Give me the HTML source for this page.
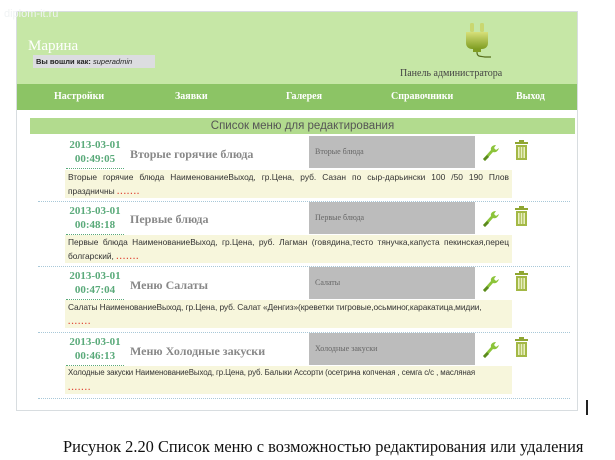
<!DOCTYPE html>
<html><head><meta charset="utf-8"><style>
*{margin:0;padding:0;box-sizing:border-box}
body{width:615px;height:460px;background:#fff;position:relative;overflow:hidden;font-family:"Liberation Sans",sans-serif}
.abs{position:absolute}
#frame{left:16px;top:11px;width:562px;height:400px;border:1px solid #d8dde0;background:#fff}
#hdr{left:17px;top:12px;width:560px;height:72px;background:#c6e7a6}
#nav{left:17px;top:84px;width:560px;height:26px;background:#8cc465}
.nav{top:91px;font:bold 10px "Liberation Serif",serif;color:#fff}
#tb{left:30px;top:118px;width:545px;height:16px;background:#b2db8e;text-align:center;font-size:11.5px;color:#555;line-height:16px}
.date{font:bold 11px "Liberation Serif",serif;color:#5aaa7a;text-align:center;width:58px;line-height:14px;border-bottom:1px dotted #5aaa7a;padding-bottom:2px}
.ttl{font:bold 12px "Liberation Serif",serif;color:#888}
.gray{width:166px;height:32px;background:#bcbcbc;font:8px "Liberation Serif",serif;color:#666;padding:11px 6px}
.desc{left:65px;width:447px;height:28px;background:#f7f6dc;font-size:8.4px;color:#333;line-height:14px;padding:0 3px;text-align:justify;overflow:hidden}
.nw{white-space:nowrap;display:block;letter-spacing:-0.1px}
.dots{color:#e04a3a;font-weight:bold;letter-spacing:1px}
.sep{left:38px;width:532px;border-top:1px dotted #a8c8d8}
</style></head><body>
<div id="frame" class="abs"></div>
<div id="hdr" class="abs"></div>
<div class="abs" style="left:4px;top:8px;font-size:11px;color:#f0f3f4">diplom-it.ru</div>
<div class="abs" style="left:28px;top:38px;font:15px 'Liberation Serif',serif;color:#fff">Марина</div>
<div class="abs" style="left:33px;top:55px;width:122px;height:13px;background:#dcdde0;font-size:7.5px;line-height:13px;padding-left:3px;color:#222"><b>Вы вошли как:</b> <i>superadmin</i></div>
<svg class="abs" style="left:463px;top:22px" width="32" height="38" viewBox="0 0 32 38">
<defs><linearGradient id="g" x1="0" y1="0" x2="0" y2="1"><stop offset="0" stop-color="#d7e07a"/><stop offset="1" stop-color="#7f9d22"/></linearGradient></defs>
<rect x="7" y="1" width="4" height="9" rx="1.5" fill="#c9d770"/><rect x="17" y="1" width="4" height="9" rx="1.5" fill="#c9d770"/>
<path d="M3 10h22v11c0 4-3 6-6 6h-10c-3 0-6-2-6-6z" fill="url(#g)"/>
<rect x="10" y="27" width="8" height="3" fill="#7f9d22"/>
<path d="M14 30c0 5 3 4 8 5h6" stroke="#556b1a" stroke-width="1.2" fill="none"/>
</svg>
<div class="abs" style="left:400px;top:68px;font:10px 'Liberation Serif',serif;color:#444">Панель администратора</div>
<div id="nav" class="abs"></div>
<div class="abs nav" style="left:54px">Настройки</div>
<div class="abs nav" style="left:175px">Заявки</div>
<div class="abs nav" style="left:286px">Галерея</div>
<div class="abs nav" style="left:391px">Справочники</div>
<div class="abs nav" style="left:516px">Выход</div>
<div id="tb" class="abs">Список меню для редактирования</div>

<div class="abs date" style="left:66px;top:138px">2013-03-01<br>00:49:05</div>
<div class="abs ttl" style="left:130px;top:147px">Вторые горячие блюда</div>
<div class="abs gray" style="left:309px;top:136px">Вторые блюда</div>
<div class="abs desc" style="top:170px">Вторые горячие блюда НаименованиеВыход, гр.Цена, руб. Сазан по сыр-дарьински 100 /50 190 Плов праздничны <span class="dots">.......</span></div>
<div class="abs sep" style="top:201px"></div>

<div class="abs date" style="left:66px;top:204px">2013-03-01<br>00:48:18</div>
<div class="abs ttl" style="left:130px;top:212px">Первые блюда</div>
<div class="abs gray" style="left:309px;top:202px">Первые блюда</div>
<div class="abs desc" style="top:235px">Первые блюда НаименованиеВыход, гр.Цена, руб. Лагман (говядина,тесто тянучка,капуста пекинская,перец болгарский, <span class="dots">.......</span></div>
<div class="abs sep" style="top:266px"></div>

<div class="abs date" style="left:66px;top:269px">2013-03-01<br>00:47:04</div>
<div class="abs ttl" style="left:130px;top:278px">Меню Салаты</div>
<div class="abs gray" style="left:309px;top:267px">Салаты</div>
<div class="abs desc" style="top:300px"><span class="nw">Салаты НаименованиеВыход, гр.Цена, руб. Салат «Денгиз»(креветки тигровые,осьминог,каракатица,мидии,</span><span class="dots">.......</span></div>
<div class="abs sep" style="top:332px"></div>

<div class="abs date" style="left:66px;top:335px">2013-03-01<br>00:46:13</div>
<div class="abs ttl" style="left:130px;top:344px">Меню Холодные закуски</div>
<div class="abs gray" style="left:309px;top:333px">Холодные закуски</div>
<div class="abs desc" style="top:366px"><span class="nw" style="font-size:7.9px">Холодные закуски НаименованиеВыход, гр.Цена, руб. Балыки Ассорти (осетрина копченая , семга с/с , масляная</span><span class="dots">.......</span></div>
<div class="abs sep" style="top:398px"></div>

<svg width="0" height="0" style="position:absolute"><defs>
<g id="w"><path d="M3 19l2 2 8-9c3 1 5-1 6-4l-3 2-2-2 2-3c-3 0-6 2-5 5z" fill="#8cc43a"/><path d="M3 19l2 2 4-4-2-2z" fill="#5b8a1e"/></g>
<g id="t"><rect x="0" y="2" width="13" height="2" fill="#8fa632"/><rect x="4" y="0" width="5" height="2" fill="#8fa632"/><rect x="1" y="5" width="11" height="15" fill="#a3b845"/><rect x="3" y="7" width="1.6" height="11" fill="#e8efc0"/><rect x="5.7" y="7" width="1.6" height="11" fill="#e8efc0"/><rect x="8.4" y="7" width="1.6" height="11" fill="#e8efc0"/></g>
</defs></svg>
<svg class="abs" style="left:480px;top:140px" width="22" height="24"><use href="#w"/></svg>
<svg class="abs" style="left:515px;top:140px" width="14" height="21"><use href="#t"/></svg>
<svg class="abs" style="left:480px;top:206px" width="22" height="24"><use href="#w"/></svg>
<svg class="abs" style="left:515px;top:206px" width="14" height="21"><use href="#t"/></svg>
<svg class="abs" style="left:480px;top:271px" width="22" height="24"><use href="#w"/></svg>
<svg class="abs" style="left:515px;top:271px" width="14" height="21"><use href="#t"/></svg>
<svg class="abs" style="left:480px;top:337px" width="22" height="24"><use href="#w"/></svg>
<svg class="abs" style="left:515px;top:337px" width="14" height="21"><use href="#t"/></svg>

<div class="abs" style="left:586px;top:400px;width:1.5px;height:15px;background:#222"></div>
<div class="abs" style="left:63px;top:437px;font:16.4px 'Liberation Serif',serif;color:#111;white-space:nowrap">Рисунок 2.20 Список меню с возможностью редактирования или удаления</div>
</body></html>
